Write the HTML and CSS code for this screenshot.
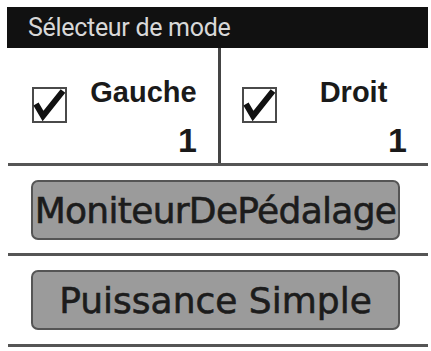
FILE: index.html
```html
<!DOCTYPE html>
<html lang="fr">
<head>
<meta charset="utf-8">
<link rel="stylesheet" href="styles.css">
</head>
<body>
<div class="page">
  <div class="header">Sélecteur de mode</div>
  <div class="modes">
    <div class="mode">
      <svg class="check" viewBox="0 0 36 36" width="36" height="36"><rect x="1" y="1" width="33" height="34" fill="#fff" stroke="#4a4a4a" stroke-width="2"/><path d="M4 17 L11 29 L31 4" fill="none" stroke="#111" stroke-width="6" stroke-linejoin="miter"/></svg>
      <div class="info">
        <div class="label">Gauche</div>
        <div class="num">1</div>
      </div>
    </div>
    <div class="mode mode-right">
      <svg class="check" viewBox="0 0 36 36" width="36" height="36"><rect x="1" y="1" width="33" height="34" fill="#fff" stroke="#4a4a4a" stroke-width="2"/><path d="M4 17 L11 29 L31 4" fill="none" stroke="#111" stroke-width="6" stroke-linejoin="miter"/></svg>
      <div class="info">
        <div class="label">Droit</div>
        <div class="num">1</div>
      </div>
    </div>
  </div>
  <div class="rule"></div>
  <div class="row"><div class="btn btn-tight">MoniteurDePédalage</div></div>
  <div class="rule"></div>
  <div class="row"><div class="btn">Puissance Simple</div></div>
  <div class="rule"></div>
</div>
</body>
</html>
```

FILE: styles.css
```css
html, body {
  margin: 0;
  padding: 0;
  background: #fff;
}
.page {
  width: 421px;
  margin-left: 7px;
  padding-top: 7px;
}
.header {
  height: 41px;
  background: #111;
  color: #d8d8d8;
  font-family: Roboto, "Liberation Sans", sans-serif;
  font-size: 25px;
  letter-spacing: -0.3px;
  line-height: 41px;
  padding-left: 21px;
  white-space: nowrap;
}
.modes {
  display: grid;
  grid-template-columns: 211px 210px;
  height: 115px;
}
.mode {
  display: flex;
  align-items: flex-start;
  padding: 0 21px 0 25px;
}
.mode-right {
  border-left: 3px solid #444;
  padding-left: 21px;
}
.check {
  display: block;
  margin-top: 39px;
  flex: none;
}
.info {
  flex: 1;
  display: flex;
  flex-direction: column;
  margin-left: 22px;
  padding-top: 30px;
  font-family: "Liberation Sans", Arial, sans-serif;
  font-weight: bold;
  color: #1a1a1a;
}
.label {
  font-size: 29px;
  line-height: 29px;
  text-align: center;
}
.num {
  font-size: 34px;
  line-height: 34px;
  margin-top: 16px;
  text-align: right;
}
.rule {
  height: 3px;
  background: #555;
  margin-left: 1px;
}
.row {
  padding: 14px 0 13px 24px;
}
.row + .rule + .row {
  padding-bottom: 14px;
}
.btn {
  width: 365px;
  height: 56px;
  border: 2px solid #555;
  border-radius: 7px;
  background: #9b9b9b;
  color: #1c1c1c;
  font-family: "DejaVu Sans", Verdana, sans-serif;
  font-size: 36px;
  -webkit-text-stroke: 0.6px #1c1c1c;
  display: flex;
  align-items: center;
  justify-content: center;
  white-space: nowrap;
  overflow: hidden;
}
.btn-tight {
  letter-spacing: -0.7px;
}
```
